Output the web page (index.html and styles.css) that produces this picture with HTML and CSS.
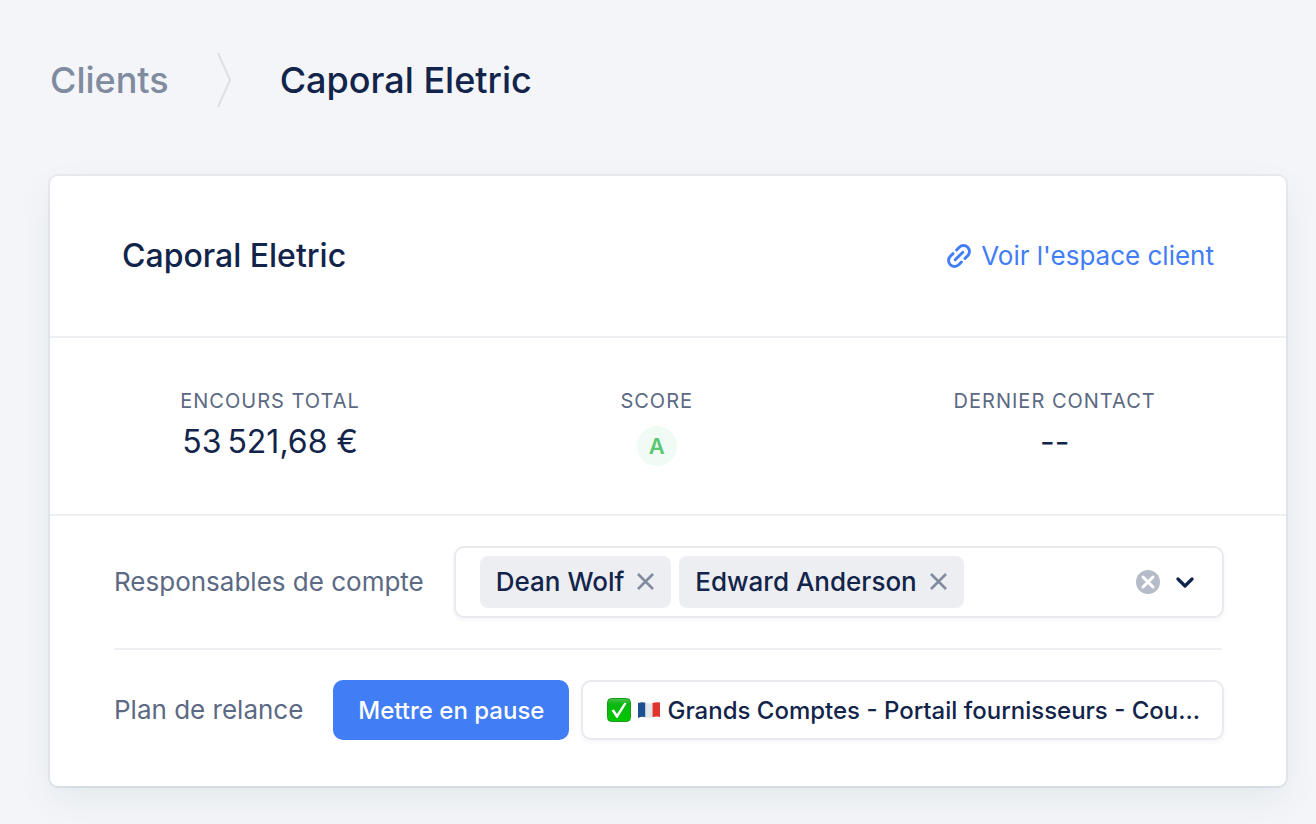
FILE: index.html
```html
<!DOCTYPE html>
<html lang="fr">
<head>
  <meta charset="UTF-8">
  <meta name="viewport" content="width=device-width, initial-scale=1.0">
  <title>Caporal Eletric</title>
  <link rel="stylesheet" href="styles.css">
</head>
<body>

  <nav class="breadcrumb">
    <a href="#" class="breadcrumb-link">Clients</a>
    <svg class="breadcrumb-sep" width="15" height="56" viewBox="0 0 15 56" fill="none" stroke="#dcdfe6" stroke-width="2" aria-hidden="true">
      <path d="M1 1 L13 28 L1 55"/>
    </svg>
    <h1>Caporal Eletric</h1>
  </nav>

  <main class="card">
    <header class="card-header">
      <h2>Caporal Eletric</h2>
      <a href="#" class="client-link">
        <svg width="24" height="24" viewBox="0 0 24 24" fill="none" stroke="#417df5" stroke-width="2.9" stroke-linecap="round" aria-hidden="true">
          <path d="M8.2 15.8 L15.8 8.2"/>
          <path d="M9.6 6 L12.3 3.3 a5.9 5.9 0 0 1 8.4 8.4 L18 14.4"/>
          <path d="M14.4 18 L11.7 20.7 a5.9 5.9 0 0 1 -8.4 -8.4 L6 9.6"/>
        </svg>
        Voir l'espace client
      </a>
    </header>

    <section class="stats">
      <div class="stat">
        <span class="stat-label">Encours total</span>
        <span class="stat-value">53&#8239;521,68 €</span>
      </div>
      <div class="stat">
        <span class="stat-label">Score</span>
        <span class="score">A</span>
      </div>
      <div class="stat">
        <span class="stat-label">Dernier contact</span>
        <span class="stat-value">--</span>
      </div>
    </section>

    <section class="settings">
      <div class="row">
        <label for="owners">Responsables de compte</label>
        <div class="multi-select">
          <span class="tag">
            Dean Wolf
            <button type="button" aria-label="Retirer Dean Wolf">
              <svg width="18" height="18" viewBox="0 0 18 18" stroke="#808b9f" stroke-width="2.6"><path d="M1 1 L16 16 M16 1 L1 16"/></svg>
            </button>
          </span>
          <span class="tag">
            Edward Anderson
            <button type="button" aria-label="Retirer Edward Anderson">
              <svg width="18" height="18" viewBox="0 0 18 18" stroke="#808b9f" stroke-width="2.6"><path d="M1 1 L16 16 M16 1 L1 16"/></svg>
            </button>
          </span>
          <input type="text" id="owners">
          <button type="button" class="clear" aria-label="Tout effacer">
            <svg width="24" height="24" viewBox="0 0 24 24"><circle cx="12" cy="12" r="12" fill="#b5bbc8"/><path d="M7 7 L17 17 M17 7 L7 17" stroke="#fff" stroke-width="3" stroke-linecap="round"/></svg>
          </button>
          <button type="button" class="toggle" aria-label="Ouvrir la liste">
            <svg width="18" height="12" viewBox="0 0 18 12" fill="none" stroke="#12244a" stroke-width="3.2" stroke-linecap="round" stroke-linejoin="round"><path d="M2 3 L9 10 L16 3"/></svg>
          </button>
        </div>
      </div>

      <div class="row">
        <span class="row-label">Plan de relance</span>
        <div class="actions">
          <button type="button" class="btn btn-primary">Mettre en pause</button>
          <button type="button" class="btn btn-plan">
            <svg width="24" height="24" viewBox="0 0 24 24" aria-hidden="true">
              <defs>
                <linearGradient id="green" x1="0" y1="0" x2="0" y2="1">
                  <stop offset="0" stop-color="#4fc04f"/>
                  <stop offset="0.25" stop-color="#08b80e"/>
                  <stop offset="1" stop-color="#00c800"/>
                </linearGradient>
              </defs>
              <rect x="0.5" y="0.5" width="23" height="23" rx="4" fill="url(#green)" stroke="#189a1c"/>
              <path d="M4.5 12.5 L7 11.5 L10 16 L17.5 4.5 L19.5 5.5 L10.5 20 L9.5 20 Z" fill="#fff"/>
            </svg>
            <svg class="flag" width="22" height="16" viewBox="0 0 22 16" aria-hidden="true">
              <path d="M0 1 Q4 -0.5 7.5 0.8 V15.2 Q4 14.2 0 16 Z" fill="#1d4f91"/>
              <path d="M7.5 0.8 Q11 2 14.5 1 V15.2 Q11 16.2 7.5 15.2 Z" fill="#e3e6ea"/>
              <path d="M14.5 1 Q18 -0.3 22 0.5 V15 Q18 14 14.5 15.2 Z" fill="#e0342f"/>
            </svg>
            <span class="plan-name">Grands Comptes - Portail fournisseurs - Cou...</span>
          </button>
        </div>
      </div>
    </section>
  </main>

</body>
</html>
```

FILE: styles.css
```css
* {
  box-sizing: border-box;
}

body {
  margin: 0;
  padding: 52px 30px 38px 50px;
  font-family: Inter, sans-serif;
  font-size: 26px;
  line-height: 1.25;
  background-color: #f4f5f9;
  color: #12244a;
}

h1, h2 {
  margin: 0;
  font-weight: 500;
}

a {
  text-decoration: none;
}

button {
  font-family: inherit;
  border: none;
  background: none;
  padding: 0;
  cursor: pointer;
}

svg {
  display: block;
  flex-shrink: 0;
}

.breadcrumb {
  display: flex;
  align-items: center;
  gap: 48px;
  margin-bottom: 68px;
}

.breadcrumb-link {
  font-size: 36px;
  font-weight: 500;
  color: #808b9f;
}

h1 {
  font-size: 36px;
}

.card {
  background-color: #fff;
  border-radius: 8px;
  box-shadow: 0 0 0 2px rgba(18, 36, 74, 0.05), 0 2px 2px rgba(18, 36, 74, 0.03), 0 14px 36px rgba(20, 80, 70, 0.07);
}

.card-header {
  display: flex;
  align-items: center;
  justify-content: space-between;
  height: 162px;
  padding: 0 72px;
  border-bottom: 2px solid #edeef2;
}

h2 {
  font-size: 32px;
}

.client-link {
  display: flex;
  align-items: center;
  gap: 10px;
  color: #417df5;
}

.stats {
  display: flex;
  justify-content: space-around;
  height: 178px;
  padding-top: 50px;
  border-bottom: 2px solid #edeef2;
}

.stat {
  display: flex;
  flex-direction: column;
  align-items: center;
}

.stat-label {
  font-size: 20px;
  line-height: 26px;
  letter-spacing: 1px;
  text-transform: uppercase;
  color: #5b6984;
}

.stat-value {
  font-size: 32px;
  line-height: 56px;
}

.score {
  width: 40px;
  margin-top: 12px;
  border-radius: 50%;
  background-color: #f1fbf5;
  color: #5ac773;
  font-size: 22px;
  font-weight: 600;
  line-height: 40px;
  text-align: center;
}

.settings {
  padding: 0 64px 16px;
}

.row {
  display: flex;
  align-items: center;
  gap: 30px;
  padding: 30px 0;
}

.row + .row {
  border-top: 2px solid #edeef2;
}

.row label, .row-label {
  flex-shrink: 0;
  color: #5b6984;
}

.multi-select {
  display: flex;
  flex: 1;
  align-items: center;
  gap: 8px;
  min-width: 0;
  margin-right: -2px;
  padding: 8px 28px 8px 24px;
  border: 2px solid #e9eaef;
  border-radius: 10px;
  box-shadow: 0 2px 4px rgba(18, 36, 74, 0.05);
}

.tag {
  display: flex;
  align-items: center;
  gap: 13px;
  height: 52px;
  padding: 0 16px;
  border-radius: 8px;
  background-color: #edeef2;
  font-weight: 500;
  white-space: nowrap;
}

.multi-select input {
  flex: 1;
  min-width: 0;
  border: none;
  outline: none;
  font: inherit;
}

.toggle {
  margin-left: 8px;
}

.actions {
  display: flex;
  flex: 1;
  gap: 12px;
  min-width: 0;
  margin-right: -2px;
}

.btn {
  height: 60px;
  padding: 0 25px;
  border-radius: 10px;
  font-size: 24px;
  font-weight: 500;
  white-space: nowrap;
}

.btn-primary {
  background-color: #417df5;
  color: #fff;
}

.btn-plan {
  display: flex;
  flex: 1;
  align-items: center;
  min-width: 0;
  padding: 0 16px 0 24px;
  border: 2px solid #e9eaef;
  box-shadow: 0 2px 4px rgba(18, 36, 74, 0.05);
  color: #12244a;
}

.flag {
  margin: 0 7px;
}

.plan-name {
  overflow: hidden;
  text-overflow: ellipsis;
}
```
